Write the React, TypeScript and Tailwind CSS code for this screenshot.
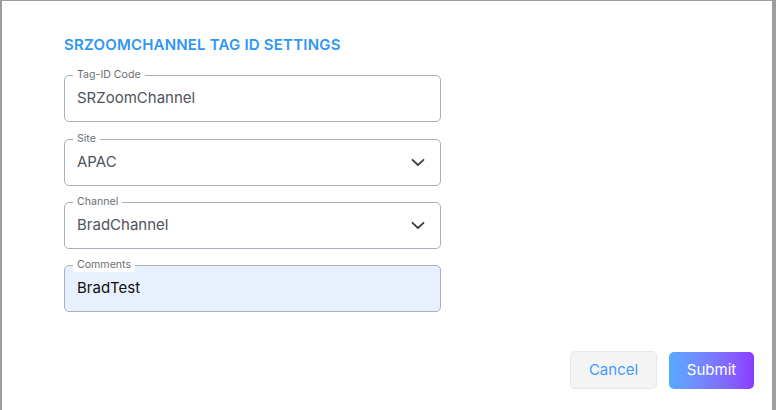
import React from "react";

const font = { fontFamily: "Inter, 'Noto Sans', sans-serif" };

function Chevron() {
  return (
    <svg width="14" height="9" viewBox="0 0 14 9" className="shrink-0">
      <polyline points="1.5,1.8 7,7 12.5,1.8" fill="none" stroke="#3a3f45" strokeWidth="1.8" strokeLinecap="round" strokeLinejoin="round" />
    </svg>
  );
}

function Field({ label, value, select, filled, className = "" }: { label: string; value: string; select?: boolean; filled?: boolean; className?: string }) {
  return (
    <div
      className={`relative h-[47px] w-[377px] rounded-[5px] border border-[#a9b0ba] flex items-center pl-[12px] pr-[15px] ${filled ? "bg-[#e8f0fe]" : "bg-white"} ${className}`}
    >
      <span className="absolute left-[8px] top-[-8px] rounded-[3px] bg-white px-[4px] pb-[1px] text-[10.6px] leading-[13px] text-[#6b6f75]">
        {label}
      </span>
      <span className={`flex-1 pb-[1px] text-[15px] leading-[20px] ${filled ? "text-[#111111]" : "text-[#4e545c]"}`}>{value}</span>
      {select && <Chevron />}
    </div>
  );
}

export default function App() {
  return (
    <div className="flex h-[410px] w-[776px] bg-[#9d9d9d] pl-[2px] pr-[4px] pt-[1px]" style={font}>
      <div className="flex flex-1 flex-col bg-white pl-[62px] pt-[34px]">
        <h2 className="text-[15px] font-semibold leading-[20px] tracking-[0.2px] text-[#2f97f3]">SRZOOMCHANNEL TAG ID SETTINGS</h2>
        <div className="mt-[20px] flex flex-col">
          <Field label="Tag-ID Code" value="SRZoomChannel" />
          <Field label="Site" value="APAC" select className="mt-[17px]" />
          <Field label="Channel" value="BradChannel" select className="mt-[16px]" />
          <Field label="Comments" value="BradTest" filled className="mt-[16px]" />
        </div>
        <div className="mt-[39px] flex items-center justify-end gap-[12px] pr-[18px]">
          <button className="h-[38px] w-[87px] rounded-[5px] border border-[#e6e7ea] bg-[#f4f4f5] text-[15px] text-[#3f9df5]">Cancel</button>
          <button className="h-[37px] w-[85px] rounded-[5px] bg-gradient-to-r from-[#55aaff] to-[#8a3bff] text-[15px] text-white">Submit</button>
        </div>
      </div>
    </div>
  );
}
